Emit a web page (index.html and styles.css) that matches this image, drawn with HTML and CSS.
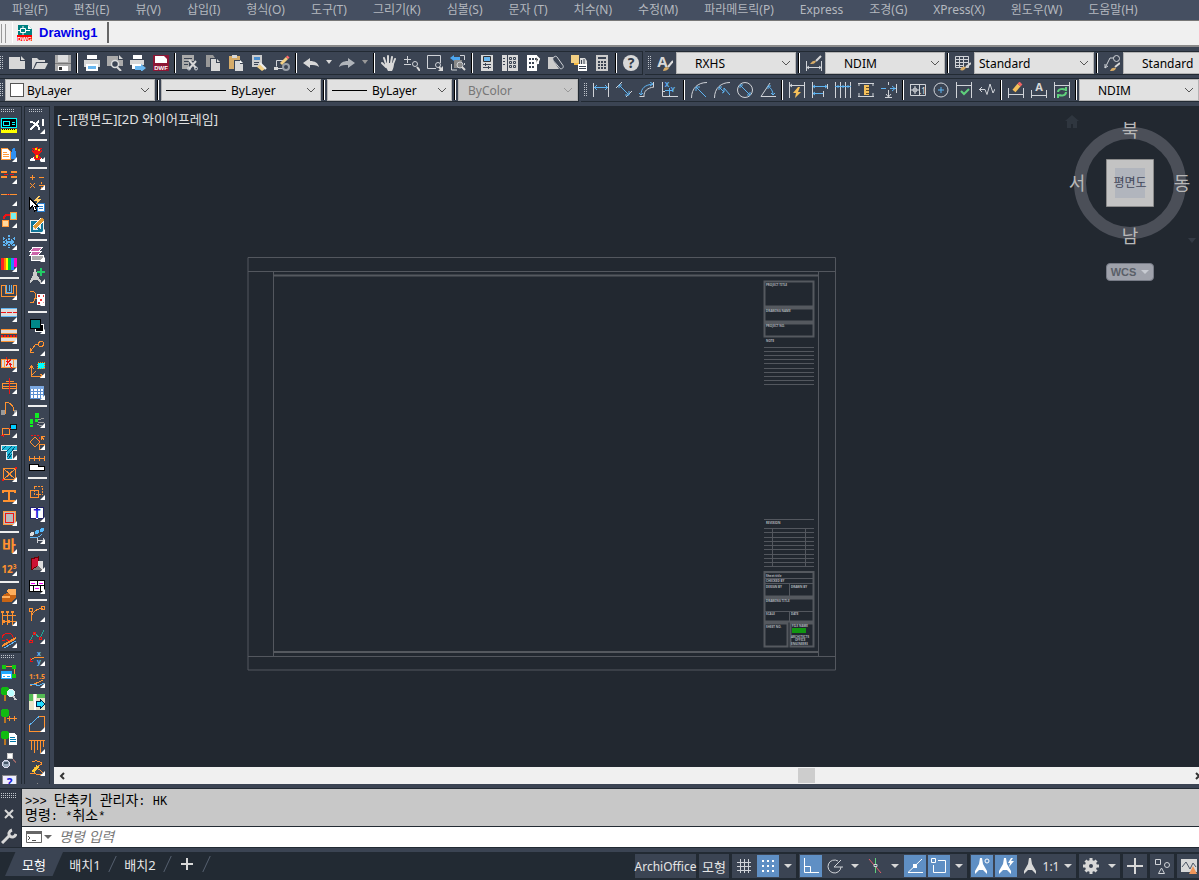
FILE: index.html
```html
<!DOCTYPE html>
<html lang="ko">
<head>
    <meta charset="UTF-8">
    <meta name="viewport" content="width=device-width, initial-scale=1.0">
    <title>Drawing1</title>
    <link rel="stylesheet" href="styles.css">
</head>
<body>
    <!-- Menu bar -->
    <nav class="menubar">
        <button>파일(F)</button>
        <button>편집(E)</button>
        <button>뷰(V)</button>
        <button>삽입(I)</button>
        <button>형식(O)</button>
        <button>도구(T)</button>
        <button>그리기(K)</button>
        <button>심볼(S)</button>
        <button>문자 (T)</button>
        <button>치수(N)</button>
        <button>수정(M)</button>
        <button>파라메트릭(P)</button>
        <button>Express</button>
        <button>조경(G)</button>
        <button>XPress(X)</button>
        <button>윈도우(W)</button>
        <button>도움말(H)</button>
    </nav>

    <!-- Open drawings -->
    <div class="filetabs">
        <span class="filegrip"></span>
        <button class="filetab">
            <svg viewBox="0 0 16 16"><path fill="#008080" d="M1 0h10l4 4v7H1z"/><path fill="#fff" d="M11 0l4 4h-4z"/><path fill="none" stroke="#fff" d="M3.5 3.5h5v4h-5zM6 1v2M6 8v2M1 5.5h2M9 5.5h4"/><path fill="#f00" d="M0 10h15v6H0z"/><text class="badge" x="7.500" y="15.500">DWG</text></svg>
            Drawing1
        </button>
    </div>

    <!-- Standard and style toolbars -->
    <div class="toolrow">
        <div class="toolbar">
            <span class="grip"></span>
            <button aria-label="새로 만들기"><svg viewBox="0 0 16 16"><path class="g" d="M0 2h11v4h5v8H0z"/><path class="g" d="M12 1l4 4h-4z"/></svg></button>
            <button aria-label="열기"><svg viewBox="0 0 16 16"><path class="g" d="M0 3h5l2 2h6v2H4l-3 7H0z"/><path class="g" d="M5 8h11l-3 6H2z"/></svg></button>
            <button aria-label="저장"><svg viewBox="0 0 16 16"><path fill="#aaa" d="M0 0h16v16H0z"/><path fill="#ddd" d="M3 0h10v7H3z"/><path fill="#fff" d="M3 11h10v5H3z"/><path fill="#777" d="M0 8h16v1H0z"/><path fill="#333" d="M4 12h3v3H4z"/></svg></button>
            <span class="sep"></span>
            <button aria-label="플롯"><svg viewBox="0 0 16 16"><path fill="#fff" d="M3 0h10v4H3z"/><path class="g" d="M0 5h16v7h-2V9H2v3H0z"/><path fill="#fff" d="M2 9h12v7H2z"/><path fill="#6ab7f0" d="M4 11h8v3H4z"/></svg></button>
            <button aria-label="플롯 미리보기"><svg viewBox="0 0 16 16"><path fill="#aaa" d="M0 1h11v4h5v6H0z"/><path class="g" d="M12 0l4 4h-4z"/><circle cx="8" cy="9" r="3.5" fill="#3b4453" stroke="#ddd" stroke-width="1.5"/><path class="l2" d="M10 12l4 4"/></svg></button>
            <button aria-label="게시"><svg viewBox="0 0 16 16"><path fill="#fff" d="M3 0h9v4H3z"/><path class="g" d="M0 5h14v5H0z"/><path fill="#fff" d="M2 9h9v5H2z"/><path fill="#6ab7f0" d="M5 11h6V9l5 4-5 4v-2H5z"/></svg></button>
            <button aria-label="DWF"><svg viewBox="0 0 16 16"><path fill="#8d1735" d="M0 0h16v16H0z"/><path fill="#fff" d="M2 1h9l3 3v4H2z"/><text class="badge" x="8" y="15">DWF</text></svg></button>
            <span class="sep"></span>
            <button aria-label="잘라내기"><svg viewBox="0 0 16 16"><path fill="#aaa" d="M0 0h12v6H7v8H0z"/><path stroke="#3b4453" d="M2 3.5h8M2 6.5h5M2 9.5h4"/><path class="l2" d="M7 5l7 8M14 6l-7 8"/><circle class="l" cx="7" cy="13.5" r="1.5"/><circle class="l" cx="14" cy="13.5" r="1.5"/></svg></button>
            <button aria-label="복사"><svg viewBox="0 0 16 16"><path fill="#999" d="M1 0h7l2 3H5v9H1z"/><path class="g" d="M6 4h5v4h4v8H6z"/><path class="g" d="M12 4l3 3h-3z"/></svg></button>
            <button aria-label="붙여넣기"><svg viewBox="0 0 16 16"><path fill="#d6ab67" d="M1 1h11v4H6v9H1z"/><path class="g" d="M4 0h5v3H4zM7 6h5v3h3v7H7z"/><path fill="#fff" d="M12 5l3 3h-3z"/></svg></button>
            <button aria-label="특성 일치"><svg viewBox="0 0 16 16"><path fill="#ccc" d="M1 0h10v12H1z"/><path fill="#4d8fce" d="M3 2h6v3H3z"/><path stroke="#3b4453" d="M3 7.5h5M3 9.5h4"/><path fill="#f2cf83" d="M6 12l4-3 4 5-3 2z"/><path stroke="#eee" stroke-width="2" d="M9 8l6 6"/></svg></button>
            <button aria-label="블록 편집기"><svg viewBox="0 0 16 16"><path class="l" d="M9 5.5H2.500v6M1 13.500h8"/><path class="g" d="M0 12h4v3H0z"/><path stroke="#f2cf83" stroke-width="3" d="M7 9l6-6"/><path stroke="#f66" stroke-width="3" d="M13 3l1.500-1.500"/><circle fill="none" stroke="#9aa0a8" stroke-width="2" cx="12" cy="12" r="3"/></svg></button>
            <span class="sep"></span>
            <button aria-label="명령 취소"><svg viewBox="0 0 16 16"><path class="g" d="M0 8l7-5v3c5 0 8 2 9 6-3-2-5-2-9-2v3z"/></svg></button>
            <button class="drop" aria-label="취소 목록"><svg viewBox="0 0 8 8"><path class="g" d="M1 1h6L4 5z"/></svg></button>
            <button aria-label="명령 복구"><svg viewBox="0 0 16 16"><path fill="#b0b4ba" d="M16 8L9 3v3c-5 0-8 2-9 6 3-2 5-2 9-2v3z"/></svg></button>
            <button class="drop" aria-label="복구 목록"><svg viewBox="0 0 8 8"><path fill="#999" d="M1 1h6L4 5z"/></svg></button>
            <span class="sep"></span>
            <button aria-label="초점이동"><svg viewBox="0 0 16 16"><path fill="none" stroke="#d8d8d8" stroke-width="2" stroke-linecap="round" d="M5 9L3 3M7 8V1M10 8l1-6M12 9l2-5M5 12L1 8"/><path class="g" d="M4 8h9c0 4-1 6-2 8H7C6 14 5 12 4 11z"/></svg></button>
            <button aria-label="실시간 줌"><svg viewBox="0 0 16 16"><path class="l" d="M0 4.5h7M3.5 1v7M0 9.5h7"/><circle class="l" cx="11" cy="9" r="2.5"/><path class="l2" d="M13 12l3 4"/></svg></button>
            <button aria-label="줌 윈도우"><svg viewBox="0 0 16 16"><path class="l" d="M9 13.5H.5V.5h13V8"/><circle class="l" cx="11" cy="10" r="2.5"/><path class="l2" d="M12 12l3 3"/><path class="g" d="M16 11v5h-5z"/></svg></button>
            <button aria-label="이전 줌"><svg viewBox="0 0 16 16"><path fill="#888" d="M4 5h8v8H4z"/><path fill="#4da6f0" d="M0 3l4-3v2h6v3H4v1z"/><path class="l" d="M10 .5h4.5V5M1.500 9v6H7M14.500 8v2"/><circle class="l" cx="10" cy="10" r="3"/><path class="l2" d="M12 12l3 3"/></svg></button>
            <span class="sep"></span>
            <button aria-label="특성"><svg viewBox="0 0 16 16"><path class="g" d="M2 0h12v16H2z"/><path fill="#6ab7f0" stroke="#333" d="M4.5 1.5h7v5h-7z"/><path stroke="#3b4453" d="M4 9.5h8M4 12.5h8M6.5 8v3M9.5 11v3"/></svg></button>
            <button aria-label="디자인 센터"><svg viewBox="0 0 16 16"><path class="g" d="M0 0h16v16H0z"/><path stroke="#3b4453" fill="none" d="M5.5 0v16M1 3.5h2M1 6.5h2M1 9.5h2M7.5 2.5h2v2h-2zM11.5 2.5h2v2h-2zM7.5 6.5h2v2h-2zM11.5 6.5h2v2h-2zM7.5 10.5h2v2h-2zM11.5 10.5h2v2h-2z"/></svg></button>
            <button aria-label="도구 팔레트"><svg viewBox="0 0 16 16"><path fill="#fff" d="M2 0h10v16H2zM13 3h1v6h-1z"/><path stroke="#3b4453" stroke-width="2" stroke-dasharray="2 1" d="M4 4h7M4 8h6M4 12h6"/><path stroke="#fff" stroke-width="2" d="M11 1l3 3-2 5"/></svg></button>
            <button aria-label="시트 세트"><svg viewBox="0 0 16 16"><path fill="#ccc" d="M0 2h5v3l6 9H0z"/><path fill="#3b4453" stroke="#d0d3d8" d="M7 1.500c-3 1-3 3 0 6l5 6c2 1 4-1 3-3L9 2c-1-1-1-1-2-.500z"/></svg></button>
            <button aria-label="마크업"><svg viewBox="0 0 16 16"><path fill="#f2cf83" d="M0 0h8v8H0z"/><path fill="#f5b942" d="M3 8h5v2H3z"/><path fill="#ddd" d="M9 3h5l2 3v4H9z"/><path stroke="#3b4453" d="M10.5 5v5M13 4v6"/><path fill="#fff" d="M7 9h9v7H7z"/><path stroke="#3b4453" d="M8 11.5h7M8 13.5h7"/></svg></button>
            <button aria-label="계산기"><svg viewBox="0 0 16 16"><path fill="#ccc" d="M2 0h12v16H2z"/><path stroke="#3b4453" stroke-width="2" d="M4 3h8"/><path stroke="#3b4453" stroke-width="2" stroke-dasharray="2 1" d="M4 7h8M4 10h8M4 13h8"/></svg></button>
            <span class="sep"></span>
            <button aria-label="도움말"><svg viewBox="0 0 16 16"><circle class="g" cx="8" cy="8" r="8"/><text class="ask" x="8" y="13">?</text></svg></button>
        </div>

        <div class="toolbar grow">
            <span class="grip wide"></span>
            <button aria-label="문자 스타일"><svg viewBox="0 0 16 16"><text class="letter big" x="5.500" y="12">A</text><path stroke="#ddd" stroke-width="2" d="M11 12l5-6"/><path fill="#d6ab67" d="M6 16c1-4 3-5 6-3-1 2-3 3-6 3z"/></svg></button>
            <div class="combo w120 indent">
                <select aria-label="문자 스타일"><option>RXHS</option></select>
                <svg viewBox="0 0 10 6"><path d="M1 1l4 4 4-4"/></svg>
            </div>
            <span class="sep"></span>
            <button aria-label="치수 스타일"><svg viewBox="0 0 16 16"><path class="l" d="M.5 6v10M15.5 6v10M1 12.5h14M3 11l-2 1.5L3 14M13 11l2 1.5-2 1.5"/><path class="l2" d="M10 6l5-5"/><path fill="#d6ab67" d="M4 9c2-3 4-4 6-3-1 3-3 3-6 3z"/></svg></button>
            <div class="combo w120 indent">
                <select aria-label="치수 스타일"><option>NDIM</option></select>
                <svg viewBox="0 0 10 6"><path d="M1 1l4 4 4-4"/></svg>
            </div>
            <span class="sep"></span>
            <button aria-label="테이블 스타일"><svg viewBox="0 0 16 16"><path class="l" d="M.5 1.5h13v11H.5zM.5 4.5h13M.5 7.5h13M.5 10.5h8M4.5 2v10M8.5 2v10"/><path class="l2" d="M11 12l5-4"/><path fill="#d6ab67" d="M5 15c1-3 3-4 6-3-1 3-3 4-6 3z"/></svg></button>
            <div class="combo w120">
                <select aria-label="테이블 스타일"><option>Standard</option></select>
                <svg viewBox="0 0 10 6"><path d="M1 1l4 4 4-4"/></svg>
            </div>
            <span class="sep"></span>
            <button aria-label="다중 지시선 스타일"><svg viewBox="0 0 16 16"><path class="l" d="M1 13L6 3h4M1 9v4l3-2"/><circle class="l" cx="12.5" cy="3.5" r="3"/><path class="l2" d="M11 12l5-4"/><path fill="#d6ab67" d="M6 16c1-3 3-4 6-3-1 3-3 3-6 3z"/></svg></button>
            <div class="combo w120 indent">
                <select aria-label="다중 지시선 스타일"><option>Standard</option></select>
                <svg viewBox="0 0 10 6"><path d="M1 1l4 4 4-4"/></svg>
            </div>
        </div>
    </div>

    <!-- Properties and dimension toolbars -->
    <div class="toolrow">
        <div class="toolbar">
            <span class="grip"></span>
            <div class="combo w150">
                <span class="swatch"></span>
                <select aria-label="색상"><option>ByLayer</option></select>
                <svg viewBox="0 0 10 6"><path d="M1 1l4 4 4-4"/></svg>
            </div>
            <span class="sep"></span>
            <div class="combo w160">
                <span class="line long"></span>
                <select aria-label="선종류"><option>ByLayer</option></select>
                <svg viewBox="0 0 10 6"><path d="M1 1l4 4 4-4"/></svg>
            </div>
            <span class="sep"></span>
            <div class="combo w125">
                <span class="line"></span>
                <select aria-label="선가중치"><option>ByLayer</option></select>
                <svg viewBox="0 0 10 6"><path d="M1 1l4 4 4-4"/></svg>
            </div>
            <span class="sep"></span>
            <div class="combo w120 off">
                <select aria-label="플롯 스타일" disabled><option>ByColor</option></select>
                <svg viewBox="0 0 10 6"><path d="M1 1l4 4 4-4"/></svg>
            </div>
        </div>

        <div class="toolbar grow">
            <span class="grip wide"></span>
            <button aria-label="선형"><svg viewBox="0 0 16 16"><path class="l" d="M.5 1v14M15.5 1v14"/><path class="b" d="M1 5.5h14M4 3L1.5 5.5 4 8M12 3l2.5 2.5L12 8"/></svg></button>
            <button aria-label="정렬"><svg viewBox="0 0 16 16"><path class="l" d="M0 6l6-6M10 15l6-6"/><path class="b" d="M3 3l10 10M3 6V3h3M13 9v4H9"/></svg></button>
            <button aria-label="호 길이"><svg viewBox="0 0 16 16"><path class="l" d="M5 14c0-5 3-8 10-9M.5 14.5h5M14.5 0v5"/><path class="b" d="M2 13C2 6 6 3 14 2M0 11l2 2 2-2M11 0l3 2-3 2"/></svg></button>
            <button aria-label="세로좌표"><svg viewBox="0 0 16 16"><path class="l" d="M.5 0v14.5H16M.5 9.5H3M7.500 12v3"/><path class="b" d="M3 8.5h8M7.500 6v7"/><text class="axis" x="5" y="5">X</text><text class="axis" x="11" y="10">Y</text></svg></button>
            <span class="sep"></span>
            <button aria-label="반지름"><svg viewBox="0 0 16 16"><path class="l" d="M16 .5C7 .5 .5 6 .5 16"/><path class="b" d="M5 5l10 10M5 9V5h4"/></svg></button>
            <button aria-label="꺾기"><svg viewBox="0 0 16 16"><path class="l" d="M16 .5C7 .5 .5 6 .5 16"/><path class="b" d="M5 5l5 5V6l6 7M10 10l-2 1M5 8V5h3"/></svg></button>
            <button aria-label="지름"><svg viewBox="0 0 16 16"><circle class="l" cx="8" cy="8" r="7.5"/><path class="b" d="M3 3l10 10M3 6V3h3M13 10v3h-3"/></svg></button>
            <button aria-label="각도"><svg viewBox="0 0 16 16"><path class="l" d="M10 1L1 14.5h15"/><path class="b" d="M8 4c3 2 5 5 5 9M8 7V4h3M11 11l2 2 2-2"/></svg></button>
            <span class="sep"></span>
            <button aria-label="신속 치수"><svg viewBox="0 0 16 16"><path class="l" d="M.5 0v16M15.5 0v16M1 3.5h14M3 2L1 3.5 3 5"/><path fill="#f5c05a" d="M9 5l-5 6h3l-1 5 6-6H9l2-5z"/></svg></button>
            <button aria-label="기준선"><svg viewBox="0 0 16 16"><path class="l" d="M.5 0v16M15.5 2v5M11.5 9v6"/><path class="b" d="M1 4.5h14M1 11.5h10M3 3L1 4.5 3 6M3 10l-2 1.5L3 13M13 3l2 1.5L13 6"/></svg></button>
            <button aria-label="연속"><svg viewBox="0 0 16 16"><path class="l" d="M.5 0v16M5.5 0v16M10.5 0v16M15.5 0v16"/><path class="b" d="M0 4.5h16M3 3v3M8 3v3M13 3v3"/></svg></button>
            <button aria-label="치수 간격"><svg viewBox="0 0 16 16"><path class="l" d="M0 1.5h16M0 14.5h16M1 1v3M15 1v3M1 11v3M15 11v3"/><path fill="#f5c05a" d="M6 3h5v10H6z"/><path stroke="#6b5122" d="M8 5.5h3M8 8.5h3M8 11.5h3"/></svg></button>
            <button aria-label="치수 끊기"><svg viewBox="0 0 16 16"><path class="l" d="M7.5 0v3M7.5 8v7M4 15.5h7M5 12l2.5 3 2.5-3M15.5 2v9"/><path class="b" d="M0 6.5h5M9 6.5h6M11 4l3 2.5L11 9"/></svg></button>
            <span class="sep"></span>
            <button aria-label="공차"><svg viewBox="0 0 16 16"><path class="l" d="M0 2.5h15.5v11H.5v-11M9.5 3v10"/><circle class="l" cx="5" cy="8" r="2"/><path class="l" d="M5 4v8M1 8h8"/><text class="small" x="12.500" y="12">.1</text></svg></button>
            <button aria-label="중심 표식"><svg viewBox="0 0 16 16"><circle class="l" cx="8" cy="8" r="7"/><path class="b" d="M8 5v6M5 8h6"/></svg></button>
            <button aria-label="검사"><svg viewBox="0 0 16 16"><path class="l" d="M.5 0v16M15.5 0v16M1 3.5h14"/><path fill="none" stroke="#5fd07c" stroke-width="2" d="M5 9l3 3 5-5"/></svg></button>
            <button aria-label="꺾어진 선형"><svg viewBox="0 0 16 16"><path class="l" d="M0 7.5h6l2 5L11 2l3 9 2-4M3 5L.5 7.5 3 10"/></svg></button>
            <span class="sep"></span>
            <button aria-label="치수 편집"><svg viewBox="0 0 16 16"><path class="l" d="M.5 6v10M15.5 6v10M1 12.5h14"/><path stroke="#f5c05a" stroke-width="4" d="M6 9l5-6"/><path stroke="#f06464" stroke-width="4" d="M11 3l2-2"/></svg></button>
            <button aria-label="치수 문자 편집"><svg viewBox="0 0 16 16"><path class="l" d="M.5 8v8M15.5 8v8M1 13.5h14"/><text class="letter" x="8" y="9">A</text></svg></button>
            <button aria-label="치수 업데이트"><svg viewBox="0 0 16 16"><path class="l" d="M.5 0v16M15.5 0v16M1 3.5h14"/><path fill="none" stroke="#5fd07c" stroke-width="2" d="M4 10c0-3 5-4 7-2M12 5v4M12 10c0 4-5 4-7 3M4 16v-4"/></svg></button>
            <span class="sep"></span>
            <div class="combo w120 indent">
                <select aria-label="치수 스타일 조정"><option>NDIM</option></select>
                <svg viewBox="0 0 10 6"><path d="M1 1l4 4 4-4"/></svg>
            </div>
        </div>
    </div>

    <div class="workspace">
        <!-- First side rail -->
        <div class="rail">
            <div class="railbar">
                <span class="railgrip"></span>
                <button aria-label="도면 설정"><svg viewBox="0 0 16 16"><path fill="#000" stroke="#0ff" d="M.5.5h15v9H.5z"/><path fill="none" stroke="#0ff" d="M2.5 3.5h6v4h-6zM11 4.5h3M11 6.5h3"/><path fill="#ff0" d="M0 11h16v4H0z"/><path stroke="#000" stroke-dasharray="1 1" d="M1 11.5h14"/></svg></button>
                <span class="railsep"></span>
                <button class="fly" aria-label="문서"><svg viewBox="0 0 16 16"><path fill="#fff" stroke="#ff9a3c" d="M.5 2.5h6l3 3v8h-9z"/><path stroke="#ff9a3c" d="M2 6.5h4M2 8.5h6M2 10.5h6"/><path fill="#2f8ff0" d="M12 2h2l1 6v5h-5V8z"/></svg></button>
                <button class="fly" aria-label="벽체 편집"><svg viewBox="0 0 16 16"><path class="o" stroke-width="2" d="M0 4h6M0 9h6M10 4h6M10 9h6"/><path class="r" d="M3 6.5h4M9 6.5h4"/></svg></button>
                <button class="fly" aria-label="중심선"><svg viewBox="0 0 16 16"><path class="o" d="M0 4.5h16"/><path class="r" d="M6 4.5h4" stroke-dasharray="1 1"/></svg></button>
                <button class="fly" aria-label="복사 배치"><svg viewBox="0 0 16 16"><path fill="#7ee" stroke="#ff9a3c" d="M9.5.5h6v7h-6z"/><path fill="#ffd9a0" stroke="#ff9a3c" d="M1.5 8.5h6v6h-6z"/><path class="r" stroke-width="2" d="M3 7c0-3 2-5 6-4"/></svg></button>
                <button class="fly" aria-label="동결"><svg viewBox="0 0 16 16"><path class="b" stroke-width="2" stroke-dasharray="2 1" d="M8 1v13M2 4l12 8M14 4L2 12M2 8h12"/></svg></button>
                <button class="fly" aria-label="색상표"><svg viewBox="0 0 16 16"><path fill="#f22" d="M0 2h3v12H0z"/><path fill="#f80" d="M3 2h2v12H3z"/><path fill="#ff0" d="M5 2h2v12H5z"/><path fill="#0c3" d="M7 2h3v12H7z"/><path fill="#28f" d="M10 2h3v12h-3z"/><path fill="#f0c" d="M13 2h3v9h-3z"/></svg></button>
                <span class="railsep"></span>
                <button class="fly" aria-label="개구부"><svg viewBox="0 0 16 16"><path class="o" d="M0 1.5h4v8h8v-8h4M.5 2v10.5h15V2"/><path class="b" d="M5.5 1v7h5V1M8 1v6"/></svg></button>
                <button class="fly" aria-label="벽"><svg viewBox="0 0 16 16"><path fill="#ddd" d="M0 3h16v7H0z"/><path class="b" d="M0 2.5h16M0 10.5h16"/><path class="r" d="M0 6.5h16" stroke-dasharray="5 1"/></svg></button>
                <button class="fly" aria-label="이중벽"><svg viewBox="0 0 16 16"><path fill="#ddd" d="M0 2h16v3H0zM0 10h16v3H0z"/><path class="o" d="M0 1.5h16M0 5.5h16M0 9.5h16M0 13.5h16"/><path class="r" stroke-width="2" d="M0 7.500h16" stroke-dasharray="2 1"/></svg></button>
                <span class="railsep"></span>
                <button class="fly" aria-label="벽 끊기"><svg viewBox="0 0 16 16"><path fill="#ddd" stroke="#ff9a3c" d="M0 3.5h16v8H0zM3.5 4v7M12.5 4v7"/><path class="r" d="M5 1l6 12M10 3l-5 7M5 5l6 4"/></svg></button>
                <button class="fly" aria-label="중심 창"><svg viewBox="0 0 16 16"><path class="o" d="M1.5 5.5h14v5h-14zM1 8.5h14M4.5 3.5h8"/><path class="r" d="M8.5 0v16"/></svg></button>
                <button class="fly" aria-label="문"><svg viewBox="0 0 16 16"><path fill="#999" d="M0 10h4v5H0zM13 10h3v5h-3z"/><path class="o" d="M4.5 14V2.5c5 0 8 3 8 8"/></svg></button>
                <button class="fly" aria-label="가구"><svg viewBox="0 0 16 16"><path fill="#0cf" stroke="#111" d="M9.5 2.5h6v5h-6z"/><path class="o" d="M1.5 6.5h7v6h-7z"/><path class="r" d="M0 13.5h3M2 15V12M8 6h2"/></svg></button>
                <button class="fly" aria-label="해치"><svg viewBox="0 0 16 16"><path fill="#2bd" stroke="#eee" d="M0 1.5h16v5h-5v9H5v-9H0z"/><path stroke="#057" d="M1 6l4-4M5 8l6-6M6 13l8-10M7 15l4-5"/></svg></button>
                <button class="fly" aria-label="기둥"><svg viewBox="0 0 16 16"><path class="o" d="M2.5 2.5h12v11h-12zM2 2l13 12M15 2L2 14"/><path class="r" stroke-width="2" d="M14 2h2M1 14h2"/></svg></button>
                <button class="fly" aria-label="철골"><svg viewBox="0 0 16 16"><path class="o" stroke-width="2" d="M2 3h12M8 3v10M2 13h12M2 2v3M14 2v3"/></svg></button>
                <button class="fly" aria-label="엘리베이터"><svg viewBox="0 0 16 16"><path fill="#bbb" stroke="#ff9a3c" d="M2.5 1.5h12v13h-12z"/><path class="r" d="M4.5 3.5h8v9h-8z"/></svg></button>
                <span class="railsep"></span>
                <button class="fly" aria-label="한글 문자"><svg viewBox="0 0 16 16"><text class="ot" x="8" y="13">바</text></svg></button>
                <button class="fly" aria-label="숫자"><svg viewBox="0 0 16 16"><text class="ot num" x="8" y="13">12³</text></svg></button>
                <span class="railsep"></span>
                <button class="fly" aria-label="침대"><svg viewBox="0 0 16 16"><path fill="#c86414" d="M1 8l5-3h9v4l-4 5H1z"/><path fill="#ffae5c" d="M5 3l3-2h7v6h-5zM1 8h8v2H1z"/></svg></button>
                <button class="fly" aria-label="난간"><svg viewBox="0 0 16 16"><path class="o" d="M1.500 1v14M6.500 1v14M11.500 1v14M1 5.500h14M1 11.5h14"/><path class="o" stroke-width="2" d="M0 2h3M5 2h3M10 2h3M3 10v3M8 10v3"/></svg></button>
                <button class="fly" aria-label="회전"><svg viewBox="0 0 16 16"><path class="r" d="M1 6c1-6 10-6 11-1s-5 4-7 2M12 9l3-3M1 8h3"/><path class="o" stroke-width="2" d="M1 14L15 6"/><path class="b" d="M3 16l12-7"/></svg></button>
            </div>
            <div class="railbar rest">
                <span class="railgrip"></span>
                <button aria-label="조경 표"><svg viewBox="0 0 16 16"><path class="o" d="M4 2.500h8M13.5 5v6"/><circle cx="3" cy="3" r="2.500" fill="#1c1"/><circle cx="13" cy="3" r="2.500" fill="#1c1"/><circle cx="13" cy="12" r="2.500" fill="#1c1"/><path fill="#fff" stroke="#2af" d="M.5 7.5h10v7H.5z"/><path stroke="#2af" stroke-width="2" d="M1 9h9"/><path stroke="#2af" d="M2 12.5h2M6 12.5h3"/></svg></button>
                <button aria-label="수목 찾기"><svg viewBox="0 0 16 16"><path stroke="#b72" stroke-width="2" d="M4 8v7"/><circle cx="4" cy="5" r="4.500" fill="#1b1"/><circle cx="10" cy="7" r="3.500" fill="#bff" stroke="#eee"/><path stroke="#ccc" stroke-width="2" d="M12 10l3 4"/></svg></button>
                <button aria-label="수목 치수"><svg viewBox="0 0 16 16"><path stroke="#b72" stroke-width="2" d="M4 8v7"/><circle cx="4" cy="5" r="4.500" fill="#1b1"/><path class="o" d="M6 10.5h10M8.500 8v5M13.500 8v5"/></svg></button>
                <button aria-label="수목 목록"><svg viewBox="0 0 16 16"><path stroke="#b72" stroke-width="2" d="M4 8v7"/><circle cx="4" cy="5" r="4.500" fill="#1b1"/><path fill="#fff" d="M8 3h5l3 3v9H8z"/><path stroke="#07a" d="M9 7.5h5M9 9.5h6M9 11.5h6"/></svg></button>
                <button aria-label="조명"><svg viewBox="0 0 16 16"><circle cx="9" cy="4" r="3" fill="#fff" stroke="#ccc"/><circle cx="5" cy="12" r="3.500" fill="#9ab" stroke="#dde"/><path fill="#456" d="M3 10h4v2H3z"/><path stroke="#966" d="M12 7l3 4"/></svg></button>
                <button aria-label="물음표"><svg viewBox="0 0 16 16"><path fill="#eef" stroke="#888" d="M1.5 1.5h14v14h-14z"/><text class="quest" x="8.500" y="13">?</text></svg></button>
            </div>
        </div>

        <!-- Second side rail -->
        <div class="rail second">
            <div class="railbar">
                <span class="railgrip"></span>
                <button class="fly" aria-label="지우기"><svg viewBox="0 0 16 16"><path class="w" stroke-width="2" d="M1 4c6 0 9 4 9 8M10 3c-4 3-6 6-9 9M14 1v7"/></svg></button>
                <span class="railsep"></span>
                <button class="fly" aria-label="분해"><svg viewBox="0 0 16 16"><path class="r" stroke-width="2" d="M8 1v6M4 2l4 5M12 2L8 7M3 5l5 3 5-3M8 8l-4 5M8 8l4 5M8 8v5M3 13h10"/><path fill="#fd0" d="M6 2h2v2H6zM9 3h2v2H9zM7 9h2v3H7z"/><path fill="#fff" d="M1 13l4-2 1 4H1zM12 12l3 3h-4z"/></svg></button>
                <span class="railsep"></span>
                <button class="fly" aria-label="계산"><svg viewBox="0 0 16 16"><path class="o" d="M1 3.500h5M3.5 1v5M10 3.500h5M1 9l5 5M6 9l-5 5M10 11.5h6M12.500 8v2M12.500 13v2"/></svg></button>
                <button aria-label="빠른 선택"><svg viewBox="0 0 16 16"><path fill="#fc6" d="M9 0L5 5h3l-1 4 5-6H9l2-3z"/><path fill="#fff" stroke="#2a7fd0" d="M8.5 7.5h7v8h-7z"/><path stroke="#2a7fd0" d="M10 10.500h4M10 12.500h4"/><path fill="#fff" stroke="#000" d="M.5 2v11l3-3 2 5 2-1-2-4h3z"/></svg></button>
                <button class="fly" aria-label="도면 편집"><svg viewBox="0 0 16 16"><path fill="#eee" d="M1 2h14v13H1z"/><path fill="none" stroke="#179" stroke-width="2" d="M3 4h10v9H3zM3 4l9 9"/><path stroke="#fff" stroke-width="5" d="M5 10l9-9"/><path stroke="#d93" stroke-width="3" d="M5 10l9-9"/></svg></button>
                <span class="railsep"></span>
                <button class="fly" aria-label="출력"><svg viewBox="0 0 16 16"><path fill="#c6a" stroke="#fff" d="M4 1.5h9l-3 4H1zM3 5.5h9l-3 4H1z"/><path fill="#aaa" stroke="#fff" d="M2 9.5h12v3l-2 2H2z"/></svg></button>
                <button class="fly" aria-label="축척 추가"><svg viewBox="0 0 16 16"><path fill="#ccc" d="M5 1h2l1 6 4 6v2l-4-3H5l-4 3v-2l3-6z"/><path stroke="#2c6" stroke-width="2" d="M12 0v8M8 4h8"/></svg></button>
                <button class="fly" aria-label="사용자"><svg viewBox="0 0 16 16"><path class="o" d="M1 1c5 0 6 2 5 4l1 3H5v3c0 2-2 2-4 2"/><path fill="#fff" d="M8 4h8v11H8z"/><path stroke="#e33" stroke-width="2" stroke-dasharray="2 3" d="M9 6h6M11 10h5M9 13h6"/></svg></button>
                <span class="railsep"></span>
                <button class="fly" aria-label="도면층"><svg viewBox="0 0 16 16"><path fill="#000" stroke="#fff" d="M6.5 6.5h8v7h-8z"/><path fill="#088" stroke="#000" d="M1.5 1.5h10v9h-10z"/></svg></button>
                <button class="fly" aria-label="지시선"><svg viewBox="0 0 16 16"><path class="o" d="M1 12l6-8h2M1 8v4h4"/><circle class="o" cx="12" cy="4" r="2.5"/></svg></button>
                <button class="fly" aria-label="좌표계"><svg viewBox="0 0 16 16"><path fill="#0ff" stroke="#f80" stroke-dasharray="1 1" d="M8.5.5h7v6h-7z"/><path class="o" d="M2.5 4v10H14M0 7l2.5-3L5 7M11 12l3 2-3 2M3 13l4-4"/></svg></button>
                <button class="fly" aria-label="표"><svg viewBox="0 0 16 16"><path fill="#fff" stroke="#5b8fd0" d="M1.5 2.5h13v12h-13z"/><path fill="#7ba7e0" d="M1 2h14v3H1z"/><path stroke="#5b8fd0" d="M1 7.5h14M1 10.5h14M4.5 5v9M8.5 5v9M11.5 5v9"/></svg></button>
                <span class="railsep"></span>
                <button class="fly" aria-label="발자국"><svg viewBox="0 0 16 16"><path fill="#1e2" d="M1 7h3v5H1zM1 13h3v2H1zM6 1h4v5H6zM6 7h3v3H6z"/><path stroke="#999" fill="none" d="M9 8l6-2M9 10l6 1M8 12l7 3"/></svg></button>
                <button class="fly" aria-label="객체 변환"><svg viewBox="0 0 16 16"><path class="r" stroke-dasharray="2 1" d="M2 1.500h8v5"/><path class="o" d="M6 3l5 5-5 5-5-5zM15 6l-3-4M12 6V2h4M10.5 10.5h5v5h-5z"/></svg></button>
                <button aria-label="치수 블록"><svg viewBox="0 0 16 16"><path class="o" d="M.5 0v5M5.500 0v5M10.500 0v5M15.500 0v5M1 2.5h14"/><path fill="#fff" stroke="#000" d="M.5 8.5h9v2h6v4H.5z"/></svg></button>
                <span class="railsep"></span>
                <button class="fly" aria-label="영역 복사"><svg viewBox="0 0 16 16"><path class="o" stroke-dasharray="2 1" d="M5.5 2.5h8v8h-8z"/><path class="o" d="M1.5 6.5h8v7h-8z"/></svg></button>
                <button class="fly" aria-label="문자 사전"><svg viewBox="0 0 16 16"><path fill="#fff" stroke="#226" d="M1.5 1.5h5L8 3l1.5-1.5h5v11h-5L8 14l-1.5-1.5h-5z"/><text class="book" x="8" y="12">T</text></svg></button>
                <button class="fly" aria-label="점 배열"><svg viewBox="0 0 16 16"><circle cx="3" cy="6" r="2" fill="#ddd"/><circle cx="8" cy="4" r="2" fill="#5bf"/><circle cx="13" cy="2" r="2" fill="#5bf"/><path class="b" d="M1 9c4 2 9 1 12-3"/><path class="l" d="M8.5 10v5M14.500 10v5M9 12.5h5"/></svg></button>
                <span class="railsep"></span>
                <button class="fly" aria-label="3D 면"><svg viewBox="0 0 16 16"><path fill="#c13" stroke="#600" d="M2 3l7-2v9l-7 4z"/><path fill="#ddd" d="M9 5h5v9H9z"/><path fill="#777" d="M9 10l5 4H3z"/></svg></button>
                <button class="fly" aria-label="타일"><svg viewBox="0 0 16 16"><path fill="#fff" stroke="#000" d="M.5 2.5h15v11H.5z"/><path stroke="#000" d="M0 7.500h15M8.500 3v5M4.500 8v5M11.500 8v5"/><path stroke="#f0f" d="M2 5.5h4M10 5.5h4M6 10.5h4"/></svg></button>
                <span class="railsep"></span>
                <button class="fly" aria-label="호"><svg viewBox="0 0 16 16"><path class="o" d="M2 15C2 8 6 3 14 2M.5 2.5h3v3h-3zM12.5.5h3v3h-3zM2 5v9"/></svg></button>
                <button class="fly" aria-label="스플라인"><svg viewBox="0 0 16 16"><path fill="none" stroke="#2a9" d="M1 13l4-8 6 5 4-8"/><path class="r" d="M0 12h3v2H0zM4 4h2v2H4zM10 9h2v2h-2z"/></svg></button>
                <button class="fly" aria-label="XY 좌표"><svg viewBox="0 0 16 16"><path class="o" d="M1 10l5-2.500h9"/><path class="r" d="M1 8v3h3"/><text class="axis" x="10" y="6">x</text><text class="axis" x="10" y="14">y</text></svg></button>
                <button class="fly" aria-label="경사"><svg viewBox="0 0 16 16"><text class="ratio" x="8" y="7">1:1.5</text><path class="o" d="M1 14l13-6"/><path class="b" d="M1 12h5l3 2 6-3"/></svg></button>
                <button aria-label="지도 내보내기"><svg viewBox="0 0 16 16"><path fill="#e8e4c8" d="M0 0h16v16H0z"/><path fill="#5b5" d="M0 0h4v7H0zM8 0h8v4H8z"/><path fill="#fff" d="M5 0h2v16H5z"/><path fill="#2df" stroke="#024" d="M7 7.5h4V5l5 5-5 5v-3H7z"/></svg></button>
                <button class="fly" aria-label="모따기"><svg viewBox="0 0 16 16"><path class="o" d="M10 .5h5.500v15H.5V9"/><path class="b" d="M.5 9L10 .5"/></svg></button>
                <button class="fly" aria-label="계단"><svg viewBox="0 0 16 16"><path class="o" d="M0 2.5h16M2.5 3v9M5.5 3v12M8.5 3v9M11.5 3v12M14.5 3v6"/></svg></button>
                <button class="fly" aria-label="스케치"><svg viewBox="0 0 16 16"><path class="o" d="M3 2c3-2 9-1 10 2l-8 4c3 0 7 2 10 6M1 14c2-2 8 2 14 0"/><path stroke="#fc3" stroke-width="3" d="M4 12l5-6"/></svg></button>
                <button aria-label="더 보기"><svg viewBox="0 0 16 16"><path fill="#888" d="M6 3l2-2 2 2z"/></svg></button>
            </div>
        </div>

        <!-- Model space -->
        <div class="viewport">
            <div class="canvas">
                <p class="viewlabel">[−][평면도][2D 와이어프레임]</p>

                <svg class="sheet" viewBox="0 0 600 425">
                    <path class="frame" d="M8 7.5h587.5v412.5H8zM8 21.5h587M8 406.5h587M33.5 21v386M578.5 21v386"/>
                    <path class="thick" d="M33 25.500h545M33 402h545"/>
                    <path class="box" d="M524.5 31.5h49v25h-49zM524.5 58.5h49v13h-49zM524.5 73.5h49v13h-49z"/>
                    <path class="frame" d="M524 97.5h50M524 101.5h50M524 105.5h50M524 109.5h50M524 113.5h50M524 118.5h50M524 122.5h50M524 126.5h50M524 130.5h50M524 134.5h50"/>
                    <path class="frame" d="M524 269.5h50M524 278.5h50M524 282.5h50M524 287.5h50M524 291.5h50M524 295.5h50M524 299.5h50M524 304.5h50M524 308.5h50M524 312.5h50M524 316.5h50M532.5 278v38M565.5 278v38"/>
                    <path class="box" d="M524.5 322h49v24.500h-49zM524.5 348.5h49v23h-49zM524.5 373.5h23v23h-23zM550.5 373.5h23v23h-23z"/>
                    <path class="frame" d="M524 328.5h49M524 333.5h49M549.5 334v12M524 361.5h49M549.5 361v10"/>
                    <path fill="#129612" d="M552 378h14v5h-14z"/>
                    <g class="tiny">
                        <text x="526" y="36">PROJECT TITLE</text>
                        <text x="526" y="62">DRAWING NAME</text>
                        <text x="526" y="77">PROJECT NO.</text>
                        <text x="526" y="92">NOTE</text>
                        <text x="526" y="274">REVISION</text>
                        <text x="526" y="327">Sheet title</text>
                        <text x="526" y="332">CHECKED BY</text>
                        <text x="526" y="338">DESIGN BY</text>
                        <text x="551" y="338">DRAWN BY</text>
                        <text x="526" y="352">DRAWING TITLE</text>
                        <text x="526" y="365">SCALE</text>
                        <text x="551" y="365">DATE</text>
                        <text x="526" y="378">SHEET NO.</text>
                        <text x="552" y="377">FILE NAME</text>
                        <text x="551" y="388">ARCHITECTS</text>
                        <text x="555" y="391">OFFICE</text>
                        <text x="551" y="395">ENGINEERS</text>
                    </g>
                </svg>

                <svg class="cube" viewBox="0 0 140 180">
                    <path fill="#2f363f" d="M7 15l7-6 7 6h-2v7h-4v-4h-2v4H9v-7z"/>
                    <circle cx="72" cy="77" r="50" fill="none" stroke="#4b4f58" stroke-width="12"/>
                    <path fill="#c3c3c3" stroke="#8b8b8b" d="M48.5 53.5h47v47h-47z"/>
                    <path fill="#b1b5bd" d="M57 62h30v30H57z"/>
                    <text class="face" x="72" y="81">평면도</text>
                    <text class="dir" x="72" y="31">북</text>
                    <text class="dir" x="72" y="137">남</text>
                    <text class="dir" x="19" y="84">서</text>
                    <text class="dir" x="124" y="84">동</text>
                    <path fill="#343b45" d="M130 132h8l-4 5z"/>
                </svg>
                <button class="wcs">WCS <svg viewBox="0 0 8 6"><path d="M0 1h8L4 5z"/></svg></button>
            </div>
            <div class="hscroll">
                <button aria-label="왼쪽으로"><svg viewBox="0 0 16 16"><path d="M10 5L7 8l3 3"/></svg></button>
                <span class="track"><span class="thumb"></span></span>
                <button aria-label="오른쪽으로"><svg viewBox="0 0 16 16"><path d="M6 5l3 3-3 3"/></svg></button>
            </div>
        </div>
    </div>

    <!-- Command line -->
    <div class="command">
        <div class="cmdside">
            <span class="cmdgrip"></span>
            <button aria-label="닫기"><svg viewBox="0 0 16 16"><path class="l2" d="M4 4l8 8M12 4l-8 8"/></svg></button>
            <button aria-label="사용자화"><svg viewBox="0 0 16 16"><path stroke="#d8d8d8" stroke-width="3" d="M1 15l8-8"/><path fill="none" stroke="#d8d8d8" stroke-width="3" d="M11 2c-3 1-4 4-2 6s5 1 6-2"/></svg></button>
        </div>
        <div class="cmdmain">
            <div class="history">
                <p>&gt;&gt;&gt; <span class="ko">단축키</span> <span class="ko">관리자</span>: HK</p>
                <p><span class="ko">명령</span>: *<span class="ko">취소</span>*</p>
            </div>
            <label class="prompt">
                <svg class="term" viewBox="0 0 16 12"><path fill="#fff" stroke="#666" d="M.5.5h15v11H.5z"/><path fill="#666" d="M0 0h16v3H0z"/><path fill="none" stroke="#555" d="M2 5l2 2-2 2M6 9.5h4"/></svg>
                <svg class="tri" viewBox="0 0 8 8"><path fill="#666" d="M0 2h8L4 6z"/></svg>
                <input type="text" placeholder="명령 입력" aria-label="명령 입력">
            </label>
        </div>
    </div>

    <!-- Layout tabs and status bar -->
    <div class="statusbar">
        <div class="layouts">
            <button class="active">모형</button>
            <button>배치1</button>
            <span class="slash"></span>
            <button>배치2</button>
            <span class="slash"></span>
            <button class="add" aria-label="새 배치"><svg viewBox="0 0 16 16"><path class="l2" d="M8 2v12M2 8h12"/></svg></button>
            <span class="slash"></span>
        </div>
        <div class="status">
            <div class="group"><button class="txt office">ArchiOffice</button></div>
            <div class="group"><button class="txt">모형</button></div>
            <div class="group">
                <button aria-label="그리드"><svg viewBox="0 0 16 16"><path class="l" d="M4.5 1v14M8.5 1v14M12.5 1v14M1 4.5h14M1 8.5h14M1 12.5h14"/></svg></button>
                <button class="on" aria-label="스냅"><svg viewBox="0 0 16 16"><path stroke="#fff" stroke-width="2" stroke-dasharray="2 3" d="M2 3h12M2 8h12M2 13h12"/></svg></button>
                <button class="arrow" aria-label="스냅 설정"><svg viewBox="0 0 8 8"><path class="g" d="M0 2h8L4 6z"/></svg></button>
            </div>
            <div class="group">
                <button class="on" aria-label="직교"><svg viewBox="0 0 16 16"><path class="w" d="M1.5 0v14.5H16M2 8.5h5.5v6"/></svg></button>
                <button class="mid" aria-label="극좌표"><svg viewBox="0 0 16 16"><path class="l" d="M11 3a6.5 6.5 0 1 0 3 6M7 9h9M7 9l7-7"/></svg></button>
                <button class="arrow" aria-label="극좌표 설정"><svg viewBox="0 0 8 8"><path class="g" d="M0 2h8L4 6z"/></svg></button>
                <button class="mid" aria-label="등각투영"><svg viewBox="0 0 16 16"><path stroke="#e0606a" d="M2 1l5 6M9 9l5 6"/><path stroke="#5fd07c" d="M8.5 0v6M8.5 9v6"/><path class="l" d="M7 6.5h3v2H7z"/></svg></button>
                <button class="arrow" aria-label="등각투영 설정"><svg viewBox="0 0 8 8"><path class="g" d="M0 2h8L4 6z"/></svg></button>
                <button class="on" aria-label="객체 스냅 추적"><svg viewBox="0 0 16 16"><path class="w" d="M15 1L1 14.5h15"/><path fill="#fff" d="M6 6h4v4H6z"/></svg></button>
                <button class="on" aria-label="객체 스냅"><svg viewBox="0 0 16 16"><path class="w" d="M7 2.5h7.5v12h-12V7M.5.5h4v4h-4z"/></svg></button>
                <button class="arrow" aria-label="객체 스냅 설정"><svg viewBox="0 0 8 8"><path class="g" d="M0 2h8L4 6z"/></svg></button>
            </div>
            <div class="group">
                <button class="on" aria-label="주석 객체"><svg viewBox="0 0 16 16"><path fill="#fff" d="M6 0h2l1 6 4 7v3l-4-4H5l-4 4v-3l4-7z"/><circle class="w" cx="13" cy="3" r="2"/></svg></button>
                <button class="on" aria-label="자동 축척"><svg viewBox="0 0 16 16"><path fill="#fff" d="M6 0h2l1 6 4 7v3l-4-4H5l-4 4v-3l4-7z"/><path fill="#fff" d="M13 0l-3 5h2l-1 4 5-6h-3l2-3z"/></svg></button>
                <button aria-label="주석 축척"><svg viewBox="0 0 16 16"><path class="g" d="M7 0h2l1 6 4 7v3l-4-4H6l-4 4v-3l4-7z"/></svg></button>
                <button class="txt scale">1:1</button>
                <button class="arrow" aria-label="축척 목록"><svg viewBox="0 0 8 8"><path class="g" d="M0 2h8L4 6z"/></svg></button>
            </div>
            <div class="group">
                <button aria-label="작업공간"><svg viewBox="0 0 16 16"><circle cx="8" cy="8" r="4" fill="none" stroke="#d8d8d8" stroke-width="4"/><path stroke="#d8d8d8" stroke-width="3" d="M8 0v3M8 13v3M0 8h3M13 8h3M2.5 2.5l2 2M11.5 11.5l2 2M13.5 2.5l-2 2M4.5 11.5l-2 2"/></svg></button>
                <button class="arrow far" aria-label="작업공간 목록"><svg viewBox="0 0 8 8"><path class="g" d="M0 2h8L4 6z"/></svg></button>
            </div>
            <div class="group"><button aria-label="주석 감시"><svg viewBox="0 0 16 16"><path class="l2" d="M8 0v16M0 8h16"/></svg></button></div>
            <div class="group"><button aria-label="객체 분리"><svg viewBox="0 0 16 16"><path class="l" d="M1.5 1.5h5v5h-5zM7.5 10l3 5.5h-6z"/><circle class="l" cx="13" cy="7" r="2.5"/></svg></button></div>
            <div class="group cut"><button aria-label="하드웨어 가속"><svg viewBox="0 0 16 16"><path class="g" d="M0 1h16v13H0z"/><path fill="none" stroke="#4b5565" d="M1 9l4-5 4 7 3-6 3 4"/><path fill="#f0955a" d="M12 8l4 8H8z"/></svg></button></div>
        </div>
    </div>
</body>
</html>
```
FILE: styles.css
```css
/* General */
* {
    box-sizing: border-box;
}

body {
    margin: 0;
    height: 100vh;
    display: flex;
    flex-direction: column;
    overflow: hidden;
    background: #3b4453;
    color: #e6e6e6;
    font-family: "Noto Sans", "Noto Sans CJK KR", sans-serif;
    font-size: 12px;
}

button, select, input {
    font: inherit;
    color: inherit;
    margin: 0;
    padding: 0;
    border: none;
    background: transparent;
}

p {
    margin: 0;
}

svg {
    display: block;
    flex: none;
}

/* Icon colours */
.g { fill: #d8d8d8; }
.l { fill: none; stroke: #d0d3d8; }
.l2 { fill: none; stroke: #d8d8d8; stroke-width: 2; }
.b { fill: none; stroke: #5fb4f2; }
.o { fill: none; stroke: #ff9230; }
.r { fill: none; stroke: #f01414; }
.w { fill: none; stroke: #fff; }

/* Letters inside icons */
svg text {
    text-anchor: middle;
}

.badge {
    fill: #fff;
    font-family: "Liberation Sans", sans-serif;
    font-weight: bold;
    font-size: 6px;
}

.ask {
    fill: #333b48;
    font-weight: bold;
    font-size: 14px;
}

.letter {
    fill: #d8d8d8;
    font-weight: bold;
    font-size: 11px;
}

.letter.big {
    font-size: 15px;
}

.small {
    fill: #e8e8e8;
    font-size: 8px;
}

.axis {
    fill: #5fb4f2;
    font-weight: bold;
    font-size: 7px;
}

.ot {
    fill: #ff9230;
    font-weight: bold;
    font-size: 15px;
}

.ot.num {
    font-size: 10px;
}

.ratio {
    fill: #ff9230;
    font-weight: bold;
    font-size: 7px;
}

.quest, .book {
    fill: #2222dd;
    font-weight: bold;
    font-size: 12px;
}

/* Menu bar */
.menubar {
    display: flex;
    flex: none;
    height: 20px;
    overflow: hidden;
    background: #454f61;
    color: #b4b8bf;
}

.menubar button {
    flex: none;
    padding: 0 14px 0 12px;
    line-height: 18px;
    white-space: nowrap;
}

/* Drawing tabs */
.filetabs {
    display: flex;
    flex: none;
    height: 27px;
    background: #f0f0f0;
    border-top: 1px solid #777;
    border-bottom: 2px solid #8a8a8a;
}

.filegrip {
    width: 5px;
    margin: 3px 6px 2px 1px;
    border-left: 1px solid #999;
    border-right: 1px solid #999;
}

.filetab {
    display: flex;
    align-items: center;
    gap: 6px;
    width: 97px;
    height: 21px;
    margin-top: 1px;
    padding-left: 4px;
    border-left: 1px solid #fff;
    border-right: 2px solid #666;
    color: #0000e8;
    font-family: "Liberation Sans", sans-serif;
    font-weight: bold;
    font-size: 13px;
}

.filetab svg {
    width: 16px;
    height: 16px;
}

/* Horizontal toolbars */
.toolrow {
    display: flex;
    flex: none;
    gap: 2px;
    height: 24px;
    margin-top: 4px;
}

.toolrow + .toolrow {
    margin-top: 3px;
}

.toolbar {
    display: flex;
    flex: none;
    border: 1px solid #222a33;
    border-left: none;
}

.toolbar.grow {
    flex: 1;
    min-width: 0;
    overflow: hidden;
    border-right: none;
}

.toolbar > button {
    flex: none;
    display: flex;
    align-items: center;
    justify-content: center;
    width: 23px;
}

.toolbar > button svg {
    width: 16px;
    height: 16px;
}

.toolbar > .drop {
    width: 13px;
}

.toolbar > .drop svg {
    width: 8px;
    height: 8px;
}

/* Dotted drag handles */
.grip, .railgrip, .cmdgrip {
    flex: none;
    background: conic-gradient(transparent 75%, #c0c5cc 0) 0 0 / 2px 2px;
}

.grip {
    width: 3px;
    margin: 4px 2px 4px 0;
}

.grip.wide {
    margin: 4px 2px 4px 3px;
}

.sep {
    flex: none;
    width: 2px;
    margin: 1px 2px;
    background: #fff;
    border-left: 1px solid #000;
}

.combo {
    flex: none;
    display: flex;
    align-items: center;
    padding: 0 4px;
    background: #e1e1e1;
    border: 1px solid #b4b4b4;
    color: #000;
}

.combo select {
    flex: 1;
    min-width: 0;
    appearance: none;
    opacity: 1;
}

.combo svg {
    width: 10px;
    height: 6px;
    fill: none;
    stroke: #555;
}

.combo.indent {
    padding-left: 18px;
}

.combo.off {
    padding-left: 9px;
    background: #c9c9c9;
    color: #777;
}

.combo.off svg {
    stroke: #999;
}

.w120 { width: 120px; }
.w125 { width: 125px; }
.w150 { width: 150px; }
.w160 { width: 160px; }

.swatch {
    width: 14px;
    height: 14px;
    margin-right: 3px;
    background: #fff;
    border: 1px solid #555;
}

.combo .line {
    width: 35px;
    height: 1px;
    margin-right: 5px;
    background: #000;
}

.combo .line.long {
    width: 60px;
}

/* Work area */
.workspace {
    display: flex;
    flex: 1;
    min-height: 0;
    margin-top: 4px;
}

.rail {
    display: flex;
    flex-direction: column;
    flex: none;
    width: 22px;
    overflow: hidden;
}

.rail.second {
    width: 26px;
    margin: 0 4px 0 2px;
}

.railbar {
    display: flex;
    flex-direction: column;
    flex: none;
    border: 1px solid #222a33;
    border-left: none;
}

.railbar.rest {
    flex: 1 0 auto;
}

.second .railbar {
    border-left: 1px solid #222a33;
    padding-left: 3px;
}

.railgrip {
    width: 14px;
    height: 4px;
    margin: 2px 0 2px 1px;
}

.railbar button {
    position: relative;
    flex: none;
    display: flex;
    align-items: center;
    width: 18px;
    height: 22px;
    padding-left: 1px;
}

.railbar button svg {
    width: 16px;
    height: 16px;
    shape-rendering: crispEdges;
}

/* Flyout mark in the corner of a tool */
.railbar .fly::after {
    content: "";
    position: absolute;
    right: 1px;
    bottom: 3px;
    border-left: 5px solid transparent;
    border-bottom: 5px solid #fff;
}

.railsep {
    flex: none;
    width: 19px;
    height: 2px;
    margin: 2px 0;
    background: #eee;
}

.viewport {
    display: flex;
    flex-direction: column;
    flex: 1;
    min-width: 0;
}

.canvas {
    position: relative;
    flex: 1;
    overflow: hidden;
    background: #222830;
}

.viewlabel {
    padding: 4px 3px;
    line-height: 18px;
    font-size: 13px;
    color: #e0e0e0;
}

.sheet {
    position: absolute;
    left: 186px;
    top: 144px;
    width: 600px;
    height: 425px;
}

.frame {
    fill: none;
    stroke: #53575e;
}

.thick, .box {
    fill: none;
    stroke: #55595f;
    stroke-width: 2;
}

.sheet .tiny text {
    text-anchor: start;
    fill: #b0b4ba;
    font-size: 3px;
    font-weight: bold;
}

.cube {
    position: absolute;
    right: 1px;
    top: 0;
    width: 140px;
    height: 180px;
}

.dir {
    fill: #b8b8b8;
    font-size: 18px;
}

.face {
    fill: #43485a;
    font-size: 12px;
}

.wcs {
    position: absolute;
    right: 45px;
    top: 157px;
    display: flex;
    align-items: center;
    justify-content: center;
    gap: 5px;
    width: 48px;
    height: 18px;
    border: 1px solid #777b86;
    border-radius: 4px;
    background: #9fa2ab;
    color: #5a5f68;
    font-family: "Liberation Sans", sans-serif;
    font-size: 11px;
    font-weight: bold;
}

.wcs svg {
    width: 8px;
    height: 6px;
    fill: #c8cbd2;
}

.hscroll {
    display: flex;
    flex: none;
    height: 17px;
    margin-right: -8px;
    background: #f0f0f0;
}

.hscroll button {
    width: 17px;
}

.hscroll button svg {
    width: 16px;
    height: 16px;
    fill: none;
    stroke: #333;
    stroke-width: 2;
}

.track {
    display: flex;
    flex: 1;
}

.thumb {
    width: 17px;
    margin: 1px 0 1px 65%;
    background: #cdcdcd;
}

/* Command line */
.command {
    display: flex;
    flex: none;
    margin-top: 4px;
    border-top: 1px solid #222a33;
    border-bottom: 1px solid #222a33;
}

.cmdside {
    display: flex;
    flex-direction: column;
    align-items: center;
    justify-content: space-between;
    width: 22px;
    padding: 4px 4px 3px 0;
    background: #323946;
    border-right: 1px solid #222a33;
}

.cmdside svg {
    width: 16px;
    height: 16px;
}

.cmdgrip {
    width: 16px;
    height: 6px;
}

.cmdmain {
    flex: 1;
    min-width: 0;
}

.history {
    padding: 5px 3px 2px;
    background: #c8c8c8;
    border-bottom: 1px solid #222a33;
    color: #000;
    font-family: "Liberation Mono", "Noto Sans CJK KR", monospace;
    font-size: 12px;
}

.history p {
    height: 15px;
    line-height: 15px;
}

.ko {
    font-size: 14px;
}

.prompt {
    display: flex;
    align-items: center;
    gap: 2px;
    height: 20px;
    padding-left: 4px;
    background: #fff;
}

.term {
    width: 16px;
    height: 12px;
}

.tri {
    width: 8px;
    height: 8px;
}

.prompt input {
    flex: 1;
    min-width: 0;
    margin-left: 5px;
    outline: none;
    color: #000;
    font-style: italic;
    font-size: 14px;
    line-height: 18px;
}

.prompt input::placeholder {
    color: #777;
}

/* Layout tabs */
.statusbar {
    display: flex;
    flex: none;
    justify-content: space-between;
    height: 28px;
    margin-top: 4px;
    padding-left: 5px;
    background: #222a33;
}

.layouts {
    display: flex;
    height: 24px;
    align-items: stretch;
}

.layouts button {
    width: 54px;
    font-size: 13px;
}

.layouts .active {
    width: 58px;
    margin-right: -5px;
    background: #3b4453;
    clip-path: polygon(18% 0, 100% 0, 82% 100%, 0 100%);
    color: #fff;
}

.layouts .add {
    width: 38px;
    padding-left: 11px;
}

.layouts .add svg {
    width: 16px;
    height: 16px;
}

.slash {
    width: 1px;
    margin: 4px 0;
    background: #566070;
    transform: skewX(-25deg);
}

/* Status buttons */
.status {
    display: flex;
    gap: 3px;
    padding: 2px 0;
}

.group {
    display: flex;
    align-items: center;
    gap: 2px;
    padding: 0 1px;
    background: #3b4453;
}

.group.cut {
    margin-right: -2px;
}

.group button {
    display: flex;
    align-items: center;
    justify-content: center;
    width: 22px;
    height: 22px;
    white-space: nowrap;
}

.group svg {
    width: 16px;
    height: 16px;
}

.group .on {
    background: #5f8fc4;
}

.group .arrow {
    width: 14px;
}

.group .arrow svg {
    width: 8px;
    height: 8px;
}

.group .txt {
    width: 28px;
    font-size: 13px;
}

.group .office {
    width: 59px;
    font-size: 12px;
}

.group .scale {
    width: 16px;
    font-size: 12px;
}

.group .far {
    margin-left: 1px;
}
```
